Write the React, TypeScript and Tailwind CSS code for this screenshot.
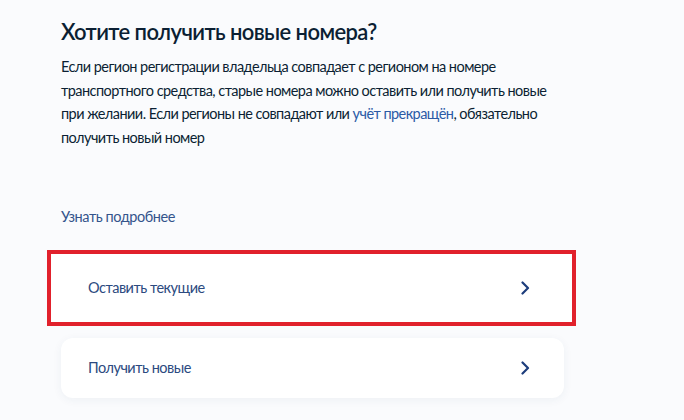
function Chevron() {
  return (
    <svg width="10" height="14" viewBox="0 0 10 14" fill="none" className="flex-shrink-0">
      <path d="M2.5 1.5 L8 7 L2.5 12.5" stroke="#1d3d7c" strokeWidth="2.2" strokeLinecap="round" strokeLinejoin="round" />
    </svg>
  )
}

export default function App() {
  return (
    <div className="min-h-[420px] bg-[#fafbfd] font-['Lato','Noto_Sans',sans-serif] text-[#0b1f33]">
      <div className="pl-[47px] pt-[17px]">
        {/* Heading + description */}
        <div className="pl-[14px]">
          <h1 className="text-[22px] font-semibold leading-[30px] tracking-[-0.6px]">Хотите получить новые номера?</h1>
          <p className="mt-[8px] w-[500px] text-[14.5px] leading-[23.5px] tracking-[-0.55px]">
            Если регион регистрации владельца совпадает с регионом на номере транспортного средства, старые номера можно
            оставить или получить новые при желании. Если регионы не совпадают или{' '}
            <span className="text-[#2b5aa6]">учёт прекращён</span>, обязательно получить новый номер
          </p>
          <div className="mt-[56px] text-[14.5px] leading-[23.5px] tracking-[-0.45px] text-[#34548c]">Узнать подробнее</div>
        </div>

        {/* Options */}
        <div className="mt-[21px] flex h-[76px] w-[529px] items-center justify-between border-4 border-[#e1212c] bg-white pl-[37px] pr-[42px]">
          <span className="text-[14.5px] tracking-[-0.5px] text-[#2c4a80]">Оставить текущие</span>
          <Chevron />
        </div>
        <div className="ml-[14px] mt-[12px] flex h-[60px] w-[503px] items-center justify-between rounded-xl bg-white pl-[27px] pr-[34px] shadow-[0_2px_10px_rgba(40,60,110,0.06)]">
          <span className="text-[14.5px] tracking-[-0.5px] text-[#2c4a80]">Получить новые</span>
          <Chevron />
        </div>
      </div>
    </div>
  )
}
